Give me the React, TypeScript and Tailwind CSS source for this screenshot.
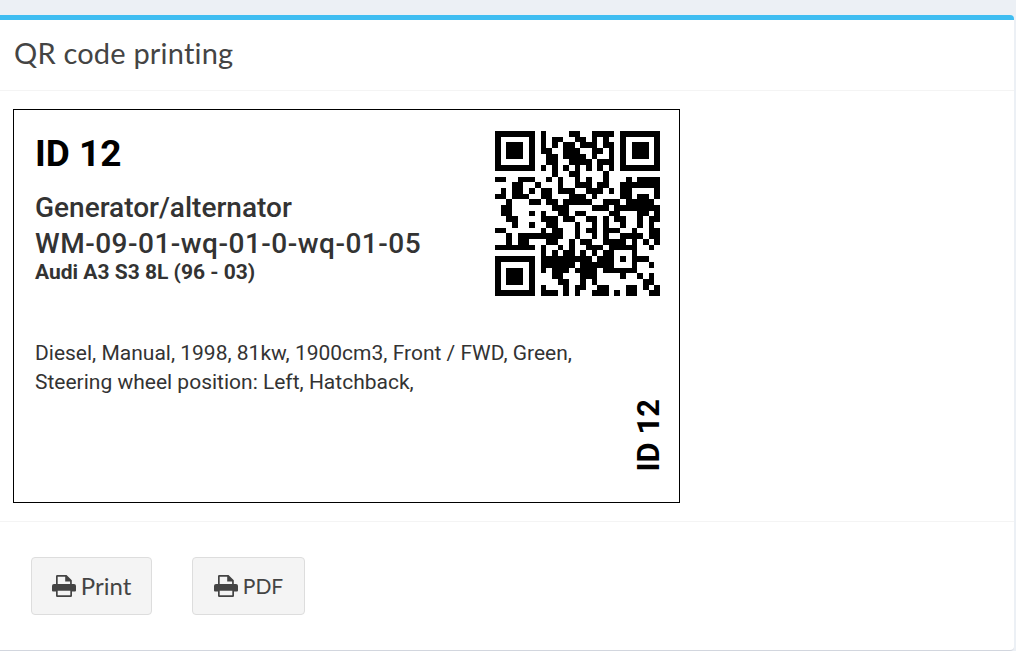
const QR = [
  "11111110100001100111101111111",
  "10000010101100110101001000001",
  "10111010101011011101101011101",
  "10111010110011100110101011101",
  "10111010011011110100101011101",
  "10000010011001111011101000001",
  "11111110101010101010101111111",
  "00000000001001100001000000000",
  "110011100" + "10100101001" + "000101111",
  "000110010" + "00100111011" + "001111111",
  "010110101" + "10111001110" + "101100001",
  "110111001" + "10001110100" + "001101101",
  "001000110" + "11011111001" + "110111110",
  "011000000" + "01110000111" + "011111111",
  "011000101" + "00110110000" + "110001101",
  "001100001" + "11011001101" + "011001011",
  "000100100" + "11000100101" + "001001010",
  "110000001" + "01100101101" + "110010011",
  "001011111" + "11100100101" + "001111011",
  "001011000" + "11001011001" + "111010101",
  "111111101" + "00101001110" + "111110010",
  "000000001" + "01011010101" + "100010000",
  "111111101" + "11111111011" + "101011100",
  "100000101" + "11111011111" + "100010010",
  "101110101" + "01110111101" + "111110000",
  "101110100" + "01100011100" + "001001010",
  "101110100" + "00110010100" + "000000110",
  "100000101" + "00010110011" + "000110101",
  "111111101" + "11010100111" + "010110011",
];

function PrintIcon() {
  return (
    <svg width="24" height="22" viewBox="0 0 24 22" className="shrink-0" fill="#444">
      <path d="M4 9.500V1.200A1.200 1.200 0 0 1 5.200 0H14.500L19.800 5.300V9.500H18.100V6.500H13.200V1.700H5.700V9.500z" />
      <path d="M2 9H22A2 2 0 0 1 24 11V15.500A1 1 0 0 1 23 16.500H20V14.500H4V16.500H1A1 1 0 0 1 0 15.500V11A2 2 0 0 1 2 9z" />
      <path fillRule="evenodd" d="M4 14H20V20.800A1.200 1.200 0 0 1 18.800 22H5.200A1.200 1.200 0 0 1 4 20.800zM5.700 15.700V20.300H18.300V15.700z" />
    </svg>
  );
}

export default function App() {
  return (
    <div className="h-[651px] w-[1016px] overflow-hidden bg-[#ecf0f5] pt-[15px] pr-[2px]">
      <div className="flex h-[636px] flex-col rounded-r-[4px] border-t-[5px] border-b border-[#3fbdf1] border-b-[#d2d6de] bg-white">
        <div className="h-[71px] border-b border-[#f4f4f4] px-[14px] pt-[11px] font-['Lato',sans-serif] text-[29px] leading-[44px] tracking-[0.2px] text-[#444]">
          QR code printing
        </div>
        <div className="h-[431px] border-b border-[#f4f4f4] pt-[18px] pl-[13px]">
          <div className="flex h-[394px] w-[667px] border border-black pl-[21px] font-['Roboto',sans-serif] text-[#333]">
            <div className="w-[460px] pt-[22px]">
              <div className="text-[37px] leading-[44px] font-bold text-black">ID 12</div>
              <div className="mt-[14px] text-[28px] leading-[36px] font-medium">Generator/alternator</div>
              <div className="text-[28px] leading-[36px] font-medium tracking-[0.5px]">WM-09-01-wq-01-0-wq-01-05</div>
              <div className="mt-[-1px] text-[21px] leading-[22px] font-bold">Audi A3 S3 8L (96 - 03)</div>
              <div className="mt-[56px] w-[560px] text-[21px] leading-[29px]">
                Diesel, Manual, 1998, 81kw, 1900cm3, Front / FWD, Green,
                <br />
                Steering wheel position: Left, Hatchback,
              </div>
            </div>
            <div className="flex w-[165px] flex-col items-end">
              <svg width="165" height="165" viewBox="0 0 29 29" shapeRendering="crispEdges" className="mt-[21px] shrink-0">
                {QR.flatMap((row, y) =>
                  row.split("").map((c, x) => (c === "1" ? <rect key={`${x}-${y}`} x={x} y={y} width="1" height="1" fill="#000" /> : null)),
                )}
              </svg>
              <div className="mt-auto mr-[-5px] mb-[31px] rotate-180 text-[31px] leading-[32px] font-bold text-black [writing-mode:vertical-rl]">
                ID 12
              </div>
            </div>
          </div>
        </div>
        <div className="flex gap-[40px] pt-[35px] pl-[31px] font-['Lato',sans-serif] text-[#444]">
          <button className="flex h-[58px] w-[121px] items-center justify-center gap-[5px] rounded-[4px] border border-[#ddd] bg-[#f4f4f4] text-[24px]">
            <PrintIcon />
            Print
          </button>
          <button className="flex h-[58px] w-[113px] items-center justify-center gap-[5px] rounded-[4px] border border-[#ddd] bg-[#f4f4f4] text-[21px]">
            <PrintIcon />
            PDF
          </button>
        </div>
      </div>
    </div>
  );
}
